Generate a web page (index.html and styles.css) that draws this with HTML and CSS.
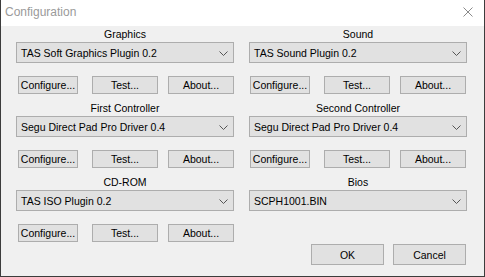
FILE: index.html
```html
<!DOCTYPE html>
<html>
<head>
<meta charset="utf-8">
<link rel="stylesheet" href="styles.css">
</head>
<body>
<div class="window">
  <div class="titlebar">
    <span class="title">Configuration</span>
    <svg class="close" width="10" height="10" viewBox="0 0 10 10"><path d="M0.5 0.5 L9.5 9.5 M9.5 0.5 L0.5 9.5" stroke="#8a8a8a" stroke-width="1" fill="none"/></svg>
  </div>
  <div class="content">
    <div class="section">
      <div class="label">Graphics</div>
      <div class="combo"><span>TAS Soft Graphics Plugin 0.2</span><svg class="chev" width="9" height="5" viewBox="0 0 9 5"><path d="M0.5 0.5 L4.5 4.5 L8.5 0.5" stroke="#555" fill="none"/></svg></div>
      <div class="btnrow"><div class="btn cfg">Configure...</div><div class="btn tst">Test...</div><div class="btn abt">About...</div></div>
    </div>
    <div class="section">
      <div class="label">Sound</div>
      <div class="combo"><span>TAS Sound Plugin 0.2</span><svg class="chev" width="9" height="5" viewBox="0 0 9 5"><path d="M0.5 0.5 L4.5 4.5 L8.5 0.5" stroke="#555" fill="none"/></svg></div>
      <div class="btnrow right"><div class="btn cfg">Configure...</div><div class="btn tst">Test...</div><div class="btn abt">About...</div></div>
    </div>
    <div class="section">
      <div class="label">First Controller</div>
      <div class="combo"><span>Segu Direct Pad Pro Driver 0.4</span><svg class="chev" width="9" height="5" viewBox="0 0 9 5"><path d="M0.5 0.5 L4.5 4.5 L8.5 0.5" stroke="#555" fill="none"/></svg></div>
      <div class="btnrow"><div class="btn cfg">Configure...</div><div class="btn tst">Test...</div><div class="btn abt">About...</div></div>
    </div>
    <div class="section">
      <div class="label">Second Controller</div>
      <div class="combo"><span>Segu Direct Pad Pro Driver 0.4</span><svg class="chev" width="9" height="5" viewBox="0 0 9 5"><path d="M0.5 0.5 L4.5 4.5 L8.5 0.5" stroke="#555" fill="none"/></svg></div>
      <div class="btnrow right"><div class="btn cfg">Configure...</div><div class="btn tst">Test...</div><div class="btn abt">About...</div></div>
    </div>
    <div class="section">
      <div class="label">CD-ROM</div>
      <div class="combo"><span>TAS ISO Plugin 0.2</span><svg class="chev" width="9" height="5" viewBox="0 0 9 5"><path d="M0.5 0.5 L4.5 4.5 L8.5 0.5" stroke="#555" fill="none"/></svg></div>
      <div class="btnrow"><div class="btn cfg">Configure...</div><div class="btn tst">Test...</div><div class="btn abt">About...</div></div>
    </div>
    <div class="section">
      <div class="label">Bios</div>
      <div class="combo"><span>SCPH1001.BIN</span><svg class="chev" width="9" height="5" viewBox="0 0 9 5"><path d="M0.5 0.5 L4.5 4.5 L8.5 0.5" stroke="#555" fill="none"/></svg></div>
      <div class="okrow"><div class="btn big">OK</div><div class="btn big">Cancel</div></div>
    </div>
  </div>
</div>
</body>
</html>
```
FILE: styles.css
```css
html, body {
  margin: 0;
  padding: 0;
  background: #f0f0f0;
}
body {
  font-family: "Liberation Sans", Arial, sans-serif;
  font-size: 10.5px;
  color: #000;
}
.window {
  width: 485px;
  height: 277px;
  box-sizing: border-box;
  border: 1px solid #3c3c3c;
  border-top: none;
  background: #f0f0f0;
  display: flex;
  flex-direction: column;
}
.titlebar {
  height: 26px;
  background: #fff;
  display: flex;
  align-items: center;
  justify-content: space-between;
  padding: 0 11px 0 4px;
  flex: none;
}
.title {
  font-family: "Liberation Sans", Arial, sans-serif;
  font-size: 12px;
  color: #9a9a9a;
  margin-top: -3px;
}
.close {
  margin-top: -2px;
}
.content {
  display: grid;
  grid-template-columns: 218px 218px;
  column-gap: 15px;
  row-gap: 6px;
  padding: 0 0 0 15px;
}
.label {
  height: 16px;
  line-height: 16px;
  text-align: center;
}
.combo {
  height: 21px;
  box-sizing: border-box;
  border: 1px solid #adadad;
  background: #e1e1e1;
  display: flex;
  align-items: center;
  justify-content: space-between;
  padding: 0 5px 0 4px;
}
.chev {
  margin-top: 1px;
}
.btnrow {
  display: flex;
  margin-top: 13px;
  padding-left: 2px;
}
.btnrow.right {
  padding-left: 1px;
}
.btn {
  height: 18px;
  box-sizing: border-box;
  border: 1px solid #adadad;
  background: #e1e1e1;
  display: flex;
  align-items: center;
  justify-content: center;
}
.cfg { width: 60px; margin-right: 14px; }
.tst { width: 66px; margin-right: 10px; }
.abt { width: 66px; }
.okrow {
  display: flex;
  justify-content: flex-end;
  gap: 9px;
  margin-top: 33px;
  padding-right: 1px;
}
.btn.big {
  width: 73px;
  height: 21px;
}
```
